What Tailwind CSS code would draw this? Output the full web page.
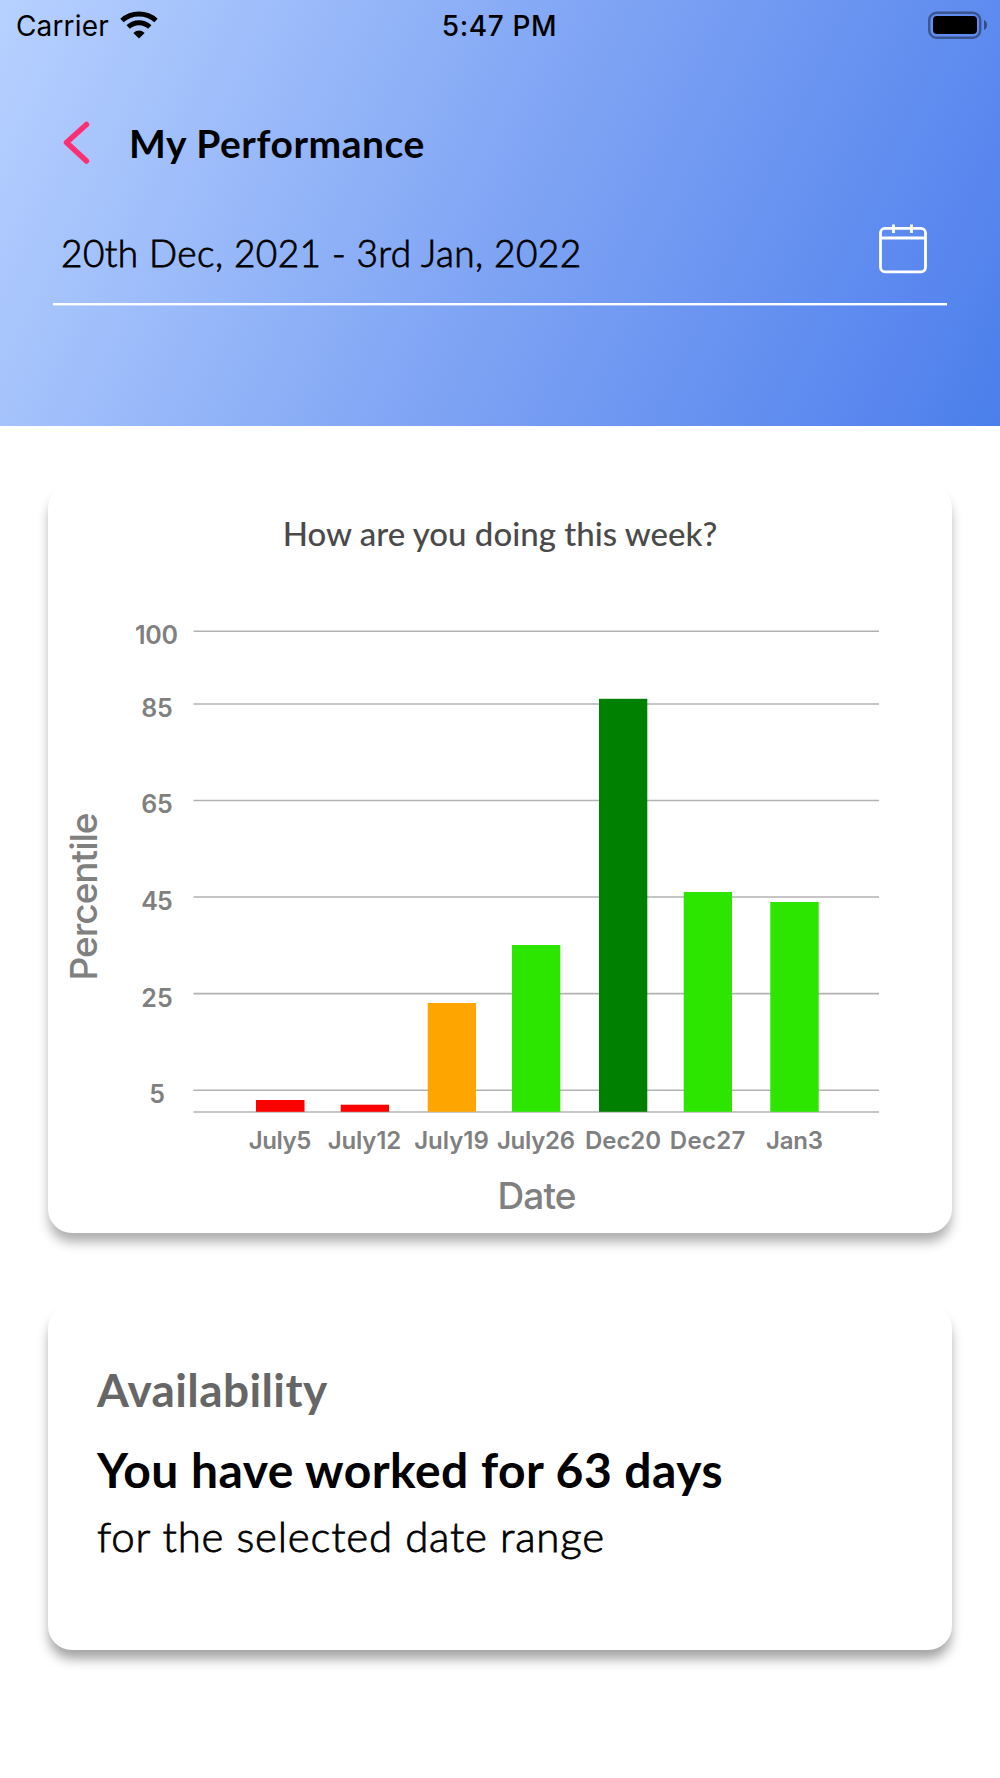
<!DOCTYPE html>
<html lang="en">
<head>
<meta charset="utf-8">
<title>My Performance</title>
<script src="https://cdn.jsdelivr.net/npm/@tailwindcss/browser@4"></script>
</head>
<body class="h-[1778px] w-[1000px] overflow-hidden bg-white font-[Lato,sans-serif] text-black">
  <header class="h-[426px] bg-[linear-gradient(115deg,#b7d1ff_0%,#80a5f4_50%,#5685ee_91%,#4a7fea_100%)]">
    <!-- Status bar -->
    <div class="grid h-[50px] grid-cols-3 items-center pr-3 pl-4 font-[Inter,sans-serif] text-[28px] leading-[52px]">
      <div class="flex items-center gap-[11px]">
        <span class="tracking-[0.15px]">Carrier</span>
        <svg class="h-[28px] w-[38px] -translate-y-px" viewBox="0 0 38 28" fill="none">
          <path d="M2 9.500C11.500 .8 26.500 .8 36 9.500" stroke="#000" stroke-width="5"/>
          <path d="M8.200 16C14.500 10.300 23.500 10.300 29.800 16" stroke="#000" stroke-width="5"/>
          <path d="M19 27.500L13.300 22Q19 17.200 24.700 22Z" fill="#000"/>
        </svg>
      </div>
      <div class="pr-[5px] text-center font-medium tracking-[0.6px]">5:47 PM</div>
      <svg class="-mt-0.5 h-[28px] w-[60px] justify-self-end" viewBox="928 10 60 28">
        <rect x="929.200" y="11.700" width="51" height="25" rx="7.500" fill="none" stroke="#000" stroke-opacity=".4" stroke-width="2.400"/>
        <rect x="933" y="15" width="44" height="18" rx="4" fill="#000"/>
        <path d="M984 19C988 20.500 988 27.500 984 29Z" fill="#000" fill-opacity=".45"/>
      </svg>
    </div>

    <div class="mt-[62px] flex h-[60px] items-center pl-[62px]">
      <svg class="h-[45px] w-[30px]" viewBox="62 120 30 45" fill="none" stroke="#ff2e74" stroke-width="5.500" stroke-linecap="round" stroke-linejoin="round"><path d="M86.500 124.500L66.500 142.500L86.500 161"/></svg>
      <h1 class="ml-[37px] pt-[3px] text-[39px] font-bold tracking-[0.55px]">My Performance</h1>
    </div>

    <div class="mx-[53px] mt-[52px] flex h-[81px] justify-between border-b-2 border-white pr-[19px] pl-[8px] shadow-[0_1px_0_rgba(255,255,255,0.4)]">
      <span class="text-[37px] leading-[58px] font-light tracking-[0.42px] [-webkit-text-stroke:0.8px_#000]">20th Dec, 2021 - 3rd Jan, 2022</span>
      <svg class="h-[50px] w-[50px]" viewBox="878 224 50 50" fill="none" stroke="#fff" stroke-width="2.800">
        <rect x="880.500" y="228.300" width="45" height="43.500" rx="4.500"/>
        <path d="M880 238H926M893.500 224.500V233M911.500 224.500V233"/>
      </svg>
    </div>
  </header>

  <main class="flex flex-col gap-[72px] px-12 pt-[58px]">
    <section class="h-[749px] rounded-[24px] bg-white pt-[19px] shadow-[0_10px_12px_-1px_rgba(0,0,0,0.32)]">
      <h2 class="text-center text-[33px] leading-[60px] font-medium text-[#4a4a4a]">How are you doing this week?</h2>
      <svg class="block h-[670px] w-[904px] font-[Inter,sans-serif]" viewBox="48 563 904 670">
        <!-- Grid lines -->
        <path d="M193.500 631.300H879M193.500 704H879M193.500 800.500H879M193.500 897H879M193.500 993.600H879M193.500 1090.200H879M193.500 1112H879" stroke="#b2b2b2" stroke-width="1.600"/>
        <!-- Weekly bars -->
        <g>
          <rect x="256" y="1100" width="48.500" height="11.800" fill="#f00"/>
          <rect x="340.700" y="1104.700" width="48.300" height="7.100" fill="#f00"/>
          <rect x="427.700" y="1003" width="48.300" height="108.800" fill="#ffa500"/>
          <rect x="512" y="945" width="48.300" height="166.800" fill="#2ce600"/>
          <rect x="599" y="698.800" width="48.300" height="413" fill="#008000"/>
          <rect x="683.700" y="892" width="48.300" height="219.800" fill="#2ce600"/>
          <rect x="770.300" y="902" width="48.400" height="209.800" fill="#2ce600"/>
        </g>
        <g fill="#808080" text-anchor="middle" class="text-[25px] font-semibold">
          <text x="156.500" y="644" textLength="43">100</text>
          <text x="157" y="716.500" textLength="31.500">85</text>
          <text x="157" y="813.300" textLength="31.500">65</text>
          <text x="157" y="909.800" textLength="31.500">45</text>
          <text x="157" y="1006.600" textLength="31.500">25</text>
          <text x="157" y="1103.200">5</text>
        </g>
        <g fill="#808080" text-anchor="middle" class="text-[24px] font-semibold">
          <text x="280" y="1148.500" textLength="62.500">July5</text>
          <text x="364.500" y="1148.500" textLength="73.500">July12</text>
          <text x="451.500" y="1148.500" textLength="74.500">July19</text>
          <text x="536" y="1148.500" textLength="78">July26</text>
          <text x="623" y="1148.500" textLength="76">Dec20</text>
          <text x="707.500" y="1148.500" textLength="75.500">Dec27</text>
          <text x="794.500" y="1148.500" textLength="57">Jan3</text>
        </g>
        <g fill="#808080" text-anchor="middle" class="text-[37px] font-medium">
          <text x="537" y="1208.500" textLength="79">Date</text>
          <text transform="translate(97.300 896.500) rotate(-90)" textLength="168">Percentile</text>
        </g>
      </svg>
    </section>

    <section class="h-[345px] rounded-[24px] bg-white pr-12 pl-[49px] pt-[45px] shadow-[0_10px_12px_-1px_rgba(0,0,0,0.36)]">
      <h2 class="text-[46px] leading-[80px] font-bold tracking-[0.4px] text-[#666]">Availability</h2>
      <p class="text-[48px] leading-[80px] font-bold tracking-[0.48px]">You have worked for 63 days</p>
      <p class="text-[42px] leading-[52px] font-light tracking-[0.8px] [-webkit-text-stroke:0.8px_#000]">for the selected date range</p>
    </section>
  </main>
</body>
</html>
